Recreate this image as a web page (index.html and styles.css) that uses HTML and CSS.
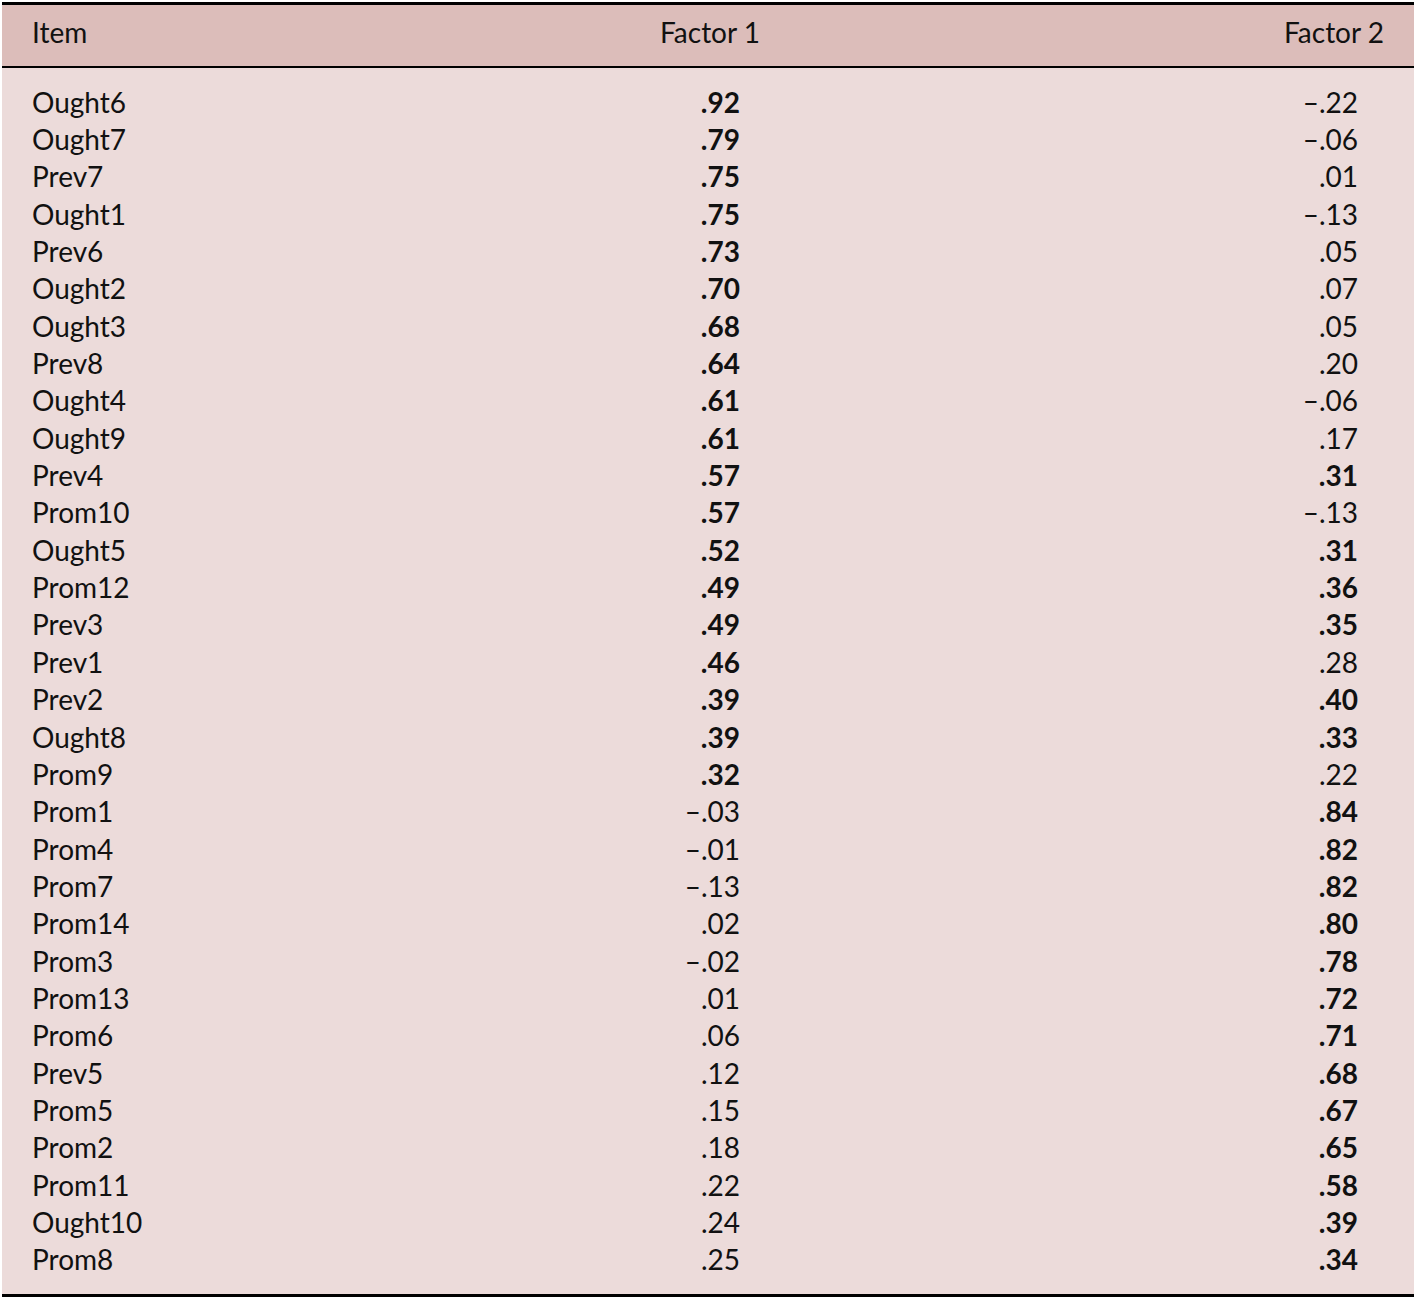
FILE: index.html
```html
<!DOCTYPE html>
<html>
<head>
<meta charset="utf-8">
<link rel="stylesheet" href="styles.css">
</head>
<body>
<div class="table">
  <div class="row head">
    <div class="c1">Item</div>
    <div class="c2 h">Factor 1</div>
    <div class="c3 h">Factor 2</div>
  </div>
  <div class="body">
    <div class="row"><div class="c1">Ought6</div><div class="c2 b">.92</div><div class="c3">–.22</div></div>
    <div class="row"><div class="c1">Ought7</div><div class="c2 b">.79</div><div class="c3">–.06</div></div>
    <div class="row"><div class="c1">Prev7</div><div class="c2 b">.75</div><div class="c3">.01</div></div>
    <div class="row"><div class="c1">Ought1</div><div class="c2 b">.75</div><div class="c3">–.13</div></div>
    <div class="row"><div class="c1">Prev6</div><div class="c2 b">.73</div><div class="c3">.05</div></div>
    <div class="row"><div class="c1">Ought2</div><div class="c2 b">.70</div><div class="c3">.07</div></div>
    <div class="row"><div class="c1">Ought3</div><div class="c2 b">.68</div><div class="c3">.05</div></div>
    <div class="row"><div class="c1">Prev8</div><div class="c2 b">.64</div><div class="c3">.20</div></div>
    <div class="row"><div class="c1">Ought4</div><div class="c2 b">.61</div><div class="c3">–.06</div></div>
    <div class="row"><div class="c1">Ought9</div><div class="c2 b">.61</div><div class="c3">.17</div></div>
    <div class="row"><div class="c1">Prev4</div><div class="c2 b">.57</div><div class="c3 b">.31</div></div>
    <div class="row"><div class="c1">Prom10</div><div class="c2 b">.57</div><div class="c3">–.13</div></div>
    <div class="row"><div class="c1">Ought5</div><div class="c2 b">.52</div><div class="c3 b">.31</div></div>
    <div class="row"><div class="c1">Prom12</div><div class="c2 b">.49</div><div class="c3 b">.36</div></div>
    <div class="row"><div class="c1">Prev3</div><div class="c2 b">.49</div><div class="c3 b">.35</div></div>
    <div class="row"><div class="c1">Prev1</div><div class="c2 b">.46</div><div class="c3">.28</div></div>
    <div class="row"><div class="c1">Prev2</div><div class="c2 b">.39</div><div class="c3 b">.40</div></div>
    <div class="row"><div class="c1">Ought8</div><div class="c2 b">.39</div><div class="c3 b">.33</div></div>
    <div class="row"><div class="c1">Prom9</div><div class="c2 b">.32</div><div class="c3">.22</div></div>
    <div class="row"><div class="c1">Prom1</div><div class="c2">–.03</div><div class="c3 b">.84</div></div>
    <div class="row"><div class="c1">Prom4</div><div class="c2">–.01</div><div class="c3 b">.82</div></div>
    <div class="row"><div class="c1">Prom7</div><div class="c2">–.13</div><div class="c3 b">.82</div></div>
    <div class="row"><div class="c1">Prom14</div><div class="c2">.02</div><div class="c3 b">.80</div></div>
    <div class="row"><div class="c1">Prom3</div><div class="c2">–.02</div><div class="c3 b">.78</div></div>
    <div class="row"><div class="c1">Prom13</div><div class="c2">.01</div><div class="c3 b">.72</div></div>
    <div class="row"><div class="c1">Prom6</div><div class="c2">.06</div><div class="c3 b">.71</div></div>
    <div class="row"><div class="c1">Prev5</div><div class="c2">.12</div><div class="c3 b">.68</div></div>
    <div class="row"><div class="c1">Prom5</div><div class="c2">.15</div><div class="c3 b">.67</div></div>
    <div class="row"><div class="c1">Prom2</div><div class="c2">.18</div><div class="c3 b">.65</div></div>
    <div class="row"><div class="c1">Prom11</div><div class="c2">.22</div><div class="c3 b">.58</div></div>
    <div class="row"><div class="c1">Ought10</div><div class="c2">.24</div><div class="c3 b">.39</div></div>
    <div class="row"><div class="c1">Prom8</div><div class="c2">.25</div><div class="c3 b">.34</div></div>
  </div>
</div>
</body>
</html>
```

FILE: styles.css
```css
html, body {
  margin: 0;
  padding: 0;
  background: #ffffff;
}
body {
  font-family: Lato, "Open Sans", sans-serif;
  font-size: 28px;
  color: #111;
}
.table {
  margin: 2px 2px 0 2px;
  width: 1412px;
  border-top: 3px solid #000;
  border-bottom: 3px solid #000;
  background: #ecdbda;
}
.row {
  display: grid;
  grid-template-columns: 558px 300px 554px;
  align-items: center;
  height: 37.35px;
}
.row.head {
  height: 63px;
  box-sizing: border-box;
  padding-bottom: 7px;
  background: #dcbdba;
  border-bottom: 2px solid #000;
}
.body {
  padding: 15px 0 16px 0;
}
.c1 {
  padding-left: 30px;
}
.c2 {
  text-align: right;
  padding-right: 120px;
}
.c3 {
  text-align: right;
  padding-right: 56px;
}
.c2.h {
  text-align: center;
  padding-right: 0;
}
.c3.h {
  padding-right: 30px;
}
.b {
  font-weight: 700;
}
```
